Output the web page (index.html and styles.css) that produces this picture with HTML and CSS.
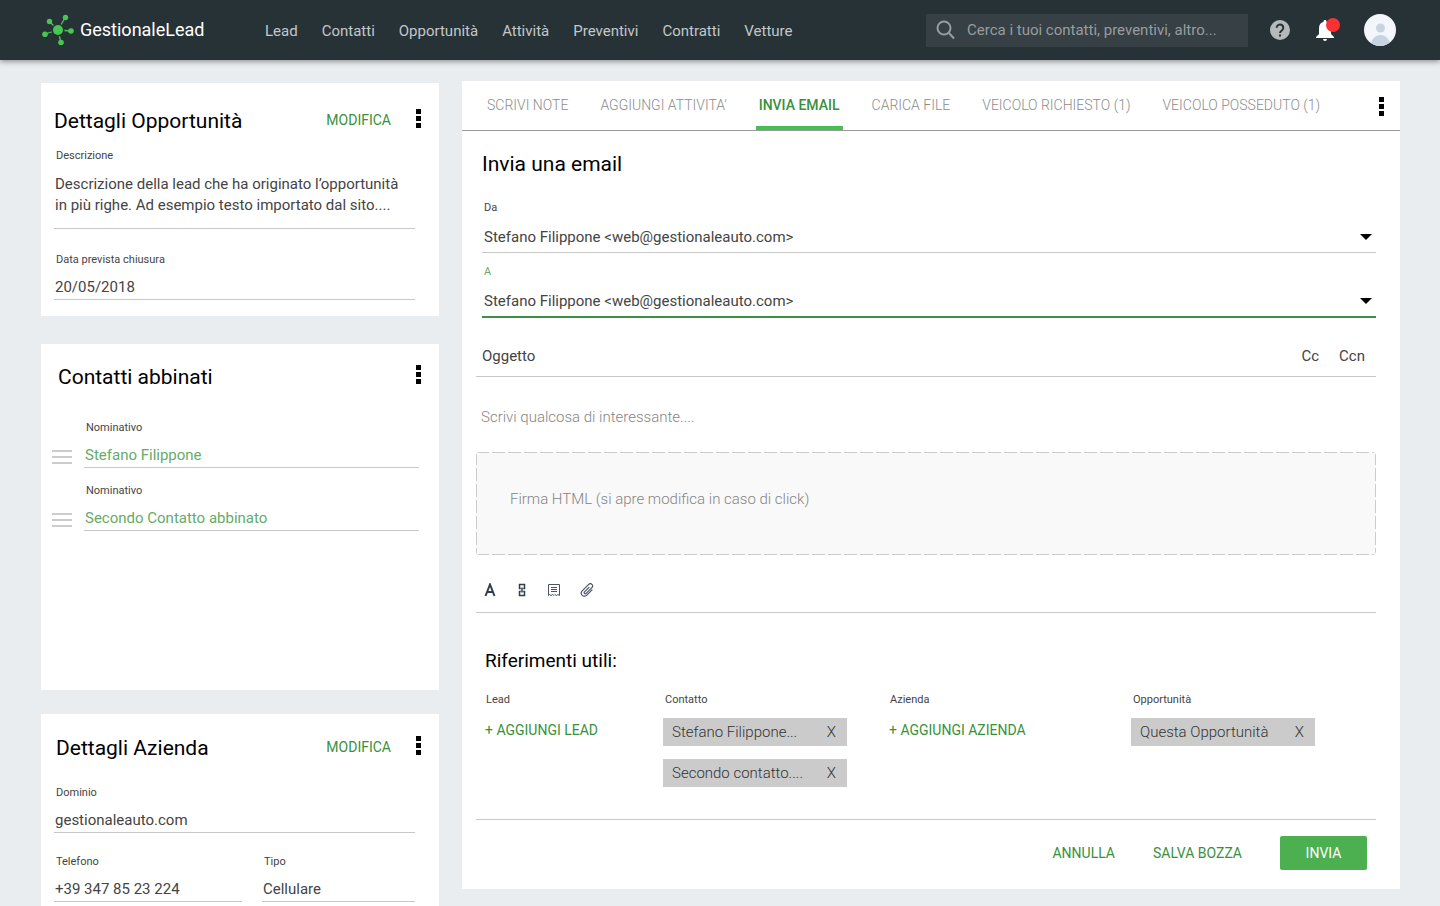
FILE: index.html
```html
<!DOCTYPE html>
<html lang="it">
<head>
    <meta charset="UTF-8">
    <meta name="viewport" content="width=device-width, initial-scale=1.0">
    <title>GestionaleLead</title>
    <link rel="stylesheet" href="styles.css">
</head>
<body>
    <header class="topbar">
        <a class="logo" href="#">
            <svg width="32" height="32" viewBox="0 0 32 32" fill="#48c750" stroke="#48c750" aria-hidden="true">
                <path d="M16 16 7 7M16 16l7.500-13M16 16l13 1M16 16l3 13M16 16 3 20" stroke-width="1.300" fill="none"/>
                <circle cx="16" cy="16" r="6.500" fill="#273237" stroke="none"/>
                <g stroke="none">
                    <circle cx="16" cy="16" r="5"/>
                    <circle cx="7.500" cy="7.500" r="2.700"/>
                    <circle cx="23.500" cy="3.500" r="2.700"/>
                    <circle cx="29" cy="17" r="2.800"/>
                    <circle cx="19" cy="28.500" r="2.800"/>
                    <circle cx="3" cy="20.300" r="2.800"/>
                </g>
            </svg>
            <span>GestionaleLead</span>
        </a>
        <nav class="menu">
            <a href="#">Lead</a>
            <a href="#">Contatti</a>
            <a href="#">Opportunità</a>
            <a href="#">Attività</a>
            <a href="#">Preventivi</a>
            <a href="#">Contratti</a>
            <a href="#">Vetture</a>
        </nav>
        <form class="search">
            <svg width="20" height="20" viewBox="0 0 20 20" fill="none" stroke="#989d9f" stroke-width="2" aria-hidden="true">
                <circle cx="8" cy="8" r="6.500"/>
                <path d="M12.500 12.500 18 18.500"/>
            </svg>
            <input type="search" aria-label="Cerca" placeholder="Cerca i tuoi contatti, preventivi, altro...">
        </form>
        <div class="tools">
            <button class="icon-btn" aria-label="Aiuto">
                <svg width="20" height="20" viewBox="0 0 20 20">
                    <circle cx="10" cy="10" r="10" fill="#b5b9bb"/>
                    <path d="M6.700 7.800a3.300 3.300 0 1 1 5.400 2.500C10.800 11.300 10 11.800 10 13" fill="none" stroke="#273237" stroke-width="2"/>
                    <rect x="9" y="14.500" width="2" height="2" fill="#273237"/>
                </svg>
            </button>
            <button class="icon-btn bell" aria-label="Notifiche">
                <svg width="20" height="24" viewBox="0 0 20 24" fill="#fff">
                    <path d="M10 2c-1 0-1.500.700-1.500 1.700C5.500 4.500 4 7 4 10v6l-3 3v1h18v-1l-3-3v-6c0-3-1.500-5.500-4.500-6.300C11.500 2.700 11 2 10 2zM8 21h4a2 2 0 0 1-4 0z"/>
                </svg>
                <span class="dot"></span>
            </button>
            <button class="icon-btn" aria-label="Profilo">
                <svg width="32" height="32" viewBox="0 0 32 32">
                    <defs><clipPath id="avatar"><circle cx="16" cy="16" r="16"/></clipPath></defs>
                    <g clip-path="url(#avatar)">
                        <rect width="32" height="32" fill="#f3f6fa"/>
                        <circle cx="16.500" cy="14" r="4.500" fill="#c9d4e2"/>
                        <path d="M7 32c0-7 4-11 9.500-11S26 25 26 32z" fill="#c9d4e2"/>
                    </g>
                </svg>
            </button>
        </div>
    </header>

    <main class="page">
        <aside class="sidebar">
            <section class="card">
                <div class="card-head">
                    <h2>Dettagli Opportunità</h2>
                    <button class="link-btn">MODIFICA</button>
                    <button class="kebab" aria-label="Altro"><i></i><i></i><i></i></button>
                </div>
                <div class="field descr">
                    <span class="label">Descrizione</span>
                    <p class="value">Descrizione della lead che ha originato l’opportunità in più righe. Ad esempio testo importato dal sito....</p>
                </div>
                <div class="field closing">
                    <span class="label">Data prevista chiusura</span>
                    <p class="value">20/05/2018</p>
                </div>
            </section>

            <section class="card contacts">
                <div class="card-head">
                    <h2>Contatti abbinati</h2>
                    <button class="kebab" aria-label="Altro"><i></i><i></i><i></i></button>
                </div>
                <div class="contact">
                    <span class="handle"></span>
                    <div class="field">
                        <span class="label">Nominativo</span>
                        <a class="value" href="#">Stefano Filippone</a>
                    </div>
                </div>
                <div class="contact">
                    <span class="handle"></span>
                    <div class="field">
                        <span class="label">Nominativo</span>
                        <a class="value" href="#">Secondo Contatto abbinato</a>
                    </div>
                </div>
            </section>

            <section class="card company">
                <div class="card-head">
                    <h2>Dettagli Azienda</h2>
                    <button class="link-btn">MODIFICA</button>
                    <button class="kebab" aria-label="Altro"><i></i><i></i><i></i></button>
                </div>
                <div class="field">
                    <span class="label">Dominio</span>
                    <p class="value">gestionaleauto.com</p>
                </div>
                <div class="field-row">
                    <div class="field">
                        <span class="label">Telefono</span>
                        <p class="value">+39 347 85 23 224</p>
                    </div>
                    <div class="field">
                        <span class="label">Tipo</span>
                        <p class="value">Cellulare</p>
                    </div>
                </div>
            </section>
        </aside>

        <section class="panel">
            <div class="tabs">
                <button class="tab">SCRIVI NOTE</button>
                <button class="tab">AGGIUNGI ATTIVITA’</button>
                <button class="tab active">INVIA EMAIL</button>
                <button class="tab">CARICA FILE</button>
                <button class="tab">VEICOLO RICHIESTO (1)</button>
                <button class="tab">VEICOLO POSSEDUTO (1)</button>
                <button class="kebab" aria-label="Altro"><i></i><i></i><i></i></button>
            </div>

            <form class="email">
                <h2>Invia una email</h2>
                <div class="select-field">
                    <label class="label" for="da">Da</label>
                    <select id="da">
                        <option>Stefano Filippone &lt;web@gestionaleauto.com&gt;</option>
                    </select>
                </div>
                <div class="select-field focused">
                    <label class="label" for="a">A</label>
                    <select id="a">
                        <option>Stefano Filippone &lt;web@gestionaleauto.com&gt;</option>
                    </select>
                </div>
                <div class="subject">
                    <input type="text" aria-label="Oggetto" placeholder="Oggetto">
                    <button type="button">Cc</button>
                    <button type="button">Ccn</button>
                </div>
                <textarea class="message" rows="1" aria-label="Messaggio" placeholder="Scrivi qualcosa di interessante...."></textarea>
                <div class="signature">Firma HTML (si apre modifica in caso di click)</div>
                <div class="format">
                    <button type="button" aria-label="Carattere">
                        <svg width="12" height="14" viewBox="0 0 12 14" fill="none" stroke="#333d4f" stroke-width="2"><path d="M1.500 13 6 1.500 10.500 13M3 9h6"/></svg>
                    </button>
                    <button type="button" aria-label="Link">
                        <svg width="12" height="14" viewBox="0 0 12 14" fill="none" stroke="#333d4f" stroke-width="1.500"><path d="M4.800 5.500H3.500v-4h5v4H7.200M4.800 8.500H3.500v4h5v-4H7.200M6 4.500v5"/></svg>
                    </button>
                    <button type="button" aria-label="Modello">
                        <svg width="12" height="14" viewBox="0 0 12 14" fill="none" stroke="#4c5566"><path d="M.500 12.500V1.500h11v11l-1.500-1-1.500 1-1.500-1-1 1-1.500-1-1.500 1-1.500-1zM3 4.500h6M3 6.500h6M3 8.500h6"/></svg>
                    </button>
                    <button type="button" aria-label="Allegato">
                        <svg width="14" height="14" viewBox="0 0 14 14" fill="none" stroke="#4c5566" stroke-width="1.200" stroke-linecap="round"><path d="M9 4.300 4.500 8.800a1.100 1.100 0 0 0 1.600 1.600l5.800-5.800a2.200 2.200 0 0 0-3.200-3.200L2.200 7.900a3.100 3.100 0 0 0 4.400 4.400l5.400-5.400"/></svg>
                    </button>
                </div>

                <h3>Riferimenti utili:</h3>
                <div class="refs">
                    <div class="ref">
                        <span class="label">Lead</span>
                        <button type="button" class="link-btn">+ AGGIUNGI LEAD</button>
                    </div>
                    <div class="ref">
                        <span class="label">Contatto</span>
                        <div class="chip">Stefano Filippone...<button type="button" aria-label="Rimuovi">X</button></div>
                        <div class="chip">Secondo contatto....<button type="button" aria-label="Rimuovi">X</button></div>
                    </div>
                    <div class="ref">
                        <span class="label">Azienda</span>
                        <button type="button" class="link-btn">+ AGGIUNGI AZIENDA</button>
                    </div>
                    <div class="ref">
                        <span class="label">Opportunità</span>
                        <div class="chip">Questa Opportunità<button type="button" aria-label="Rimuovi">X</button></div>
                    </div>
                </div>

                <div class="actions">
                    <button type="button" class="link-btn">ANNULLA</button>
                    <button type="button" class="link-btn">SALVA BOZZA</button>
                    <button type="submit" class="send">INVIA</button>
                </div>
            </form>
        </section>
    </main>
</body>
</html>
```
FILE: styles.css
```css
* {
    box-sizing: border-box;
}
body {
    margin: 0;
    min-height: 100vh;
    display: flex;
    flex-direction: column;
    background: #e9edf0;
    color: #444;
    font-family: Roboto, "Liberation Sans", sans-serif;
    font-size: 15px;
    line-height: 20px;
}
h2, h3, p {
    margin: 0;
    font-weight: 400;
}
h2, h3 {
    color: #000;
}
h2 {
    font-size: 21px;
    line-height: 32px;
}
h3 {
    font-size: 19px;
    line-height: 24px;
}
a {
    text-decoration: none;
}
button, input, select, textarea {
    margin: 0;
    padding: 0;
    border: none;
    background: none;
    color: inherit;
    font: inherit;
    outline: none;
}
button {
    cursor: pointer;
}
svg {
    display: block;
}

/* header */
.topbar {
    display: flex;
    align-items: center;
    height: 60px;
    padding: 0 44px 0 42px;
    background: #273237;
    box-shadow: 0 2px 5px rgba(0, 0, 0, 0.35);
}
.logo {
    display: flex;
    align-items: center;
    gap: 6px;
    width: 223px;
    color: #fff;
    font-size: 18px;
}
.menu {
    display: flex;
    gap: 24px;
    padding-top: 2px;
}
.menu a {
    color: #c3c7c8;
}
.search {
    display: flex;
    align-items: center;
    gap: 11px;
    width: 322px;
    height: 33px;
    margin-left: auto;
    padding: 0 10px;
    background: #364045;
}
.search input {
    flex: 1;
}
.search input::placeholder {
    color: #989d9f;
}
.tools {
    display: flex;
    align-items: center;
    gap: 25px;
    margin-left: 22px;
}
.icon-btn {
    position: relative;
}
.bell {
    margin-right: 4px;
}
.dot {
    position: absolute;
    top: 0;
    right: -5px;
    width: 14px;
    height: 14px;
    border-radius: 50%;
    background: #fc3135;
}

/* layout */
.page {
    flex: 1;
    display: grid;
    grid-template-columns: 398px 1fr;
    gap: 23px;
    padding: 21px 40px 0 41px;
}
.sidebar {
    display: flex;
    flex-direction: column;
    padding-top: 2px;
}

/* sidebar cards */
.card {
    padding: 22px 24px 16px 13px;
    background: #fff;
}
.card-head {
    display: flex;
    align-items: center;
    margin-right: -6px;
}
.card-head h2 {
    flex: 1;
}
.card-head .link-btn {
    margin-right: 25px;
    padding-bottom: 3px;
}
.link-btn {
    color: #38913c;
    font-size: 14px;
}
.kebab {
    display: flex;
    flex-direction: column;
    gap: 2px;
    padding-bottom: 6px;
}
.kebab i {
    width: 5px;
    height: 5px;
    background: #000;
}
.label {
    display: block;
    padding-left: 2px;
    font-size: 11px;
    line-height: 16px;
}
.field {
    margin-top: 21px;
    padding-bottom: 2px;
    border-bottom: 1px solid #c8c8c8;
}
.field .value {
    display: block;
    margin-top: 9px;
    padding-left: 1px;
}
.descr {
    margin-top: 11px;
    padding-bottom: 12px;
}
.field.closing {
    margin-top: 23px;
}
.descr .value {
    margin-top: 10px;
    padding-right: 10px;
    line-height: 21px;
}
.contacts {
    min-height: 346px;
    margin: 28px 0 24px;
    padding: 17px 20px 16px 11px;
}
.contacts .card-head {
    margin: 0 -2px 12px 6px;
}
.contact {
    display: flex;
    align-items: flex-end;
    gap: 12px;
}
.contact .field {
    flex: 1;
    margin-top: 15px;
}
.contact a {
    color: #66ab69;
}
.handle {
    width: 20px;
    height: 14px;
    margin-bottom: 4px;
    border: solid #ccc;
    border-width: 2px 0;
    background: linear-gradient(#ccc, #ccc) center / 100% 2px no-repeat;
}
.company {
    flex: 1;
    padding-top: 18px;
    padding-bottom: 4px;
}
.company h2 {
    padding-left: 2px;
}
.field-row {
    display: grid;
    grid-template-columns: 188fr 153fr;
    gap: 20px;
}

/* main panel */
.panel {
    align-self: start;
    margin-bottom: 17px;
    background: #fff;
}
.tabs {
    display: flex;
    gap: 26px;
    height: 50px;
    padding: 0 16px 0 22px;
    border-bottom: 1px solid #999;
}
.tab {
    padding: 2px 3px 0;
    border-bottom: 4px solid transparent;
    color: #8c8c8c;
    font-size: 14px;
    font-weight: 300;
}
.tab.active {
    border-color: #46c053;
    color: #38913c;
    font-weight: 500;
}
.tabs .kebab {
    margin-left: auto;
    padding: 16px 0 0;
}
.email {
    padding: 17px 24px 19px 14px;
}
.email h2 {
    padding-left: 6px;
}
.select-field {
    position: relative;
    margin: 20px 0 0 6px;
    border-bottom: 1px solid #c8c8c8;
}
.select-field select {
    display: block;
    width: 100%;
    height: 36px;
    padding: 8px 2px 3px;
    appearance: none;
}
.select-field::after {
    content: "";
    position: absolute;
    right: 4px;
    bottom: 12px;
    border: 6px solid transparent;
    border-top-color: #000;
    border-bottom: none;
}
.select-field.focused {
    margin-top: 11px;
    border-bottom: 2px solid #3d8f45;
}
.focused .label {
    color: #66ab69;
}
.subject {
    display: flex;
    gap: 20px;
    height: 59px;
    padding: 18px 11px 0 6px;
    border-bottom: 1px solid #c8c8c8;
}
.subject input {
    flex: 1;
}
.subject input::placeholder {
    color: #444;
}
.message {
    display: block;
    width: 100%;
    height: 20px;
    margin: 30px 0 25px;
    padding-left: 5px;
    resize: none;
    overflow: hidden;
    font-weight: 300;
}
.message::placeholder {
    color: #858585;
}
/* long dashes on the four sides */
.signature {
    min-height: 103px;
    padding: 37px 34px;
    border-radius: 4px;
    background:
        repeating-linear-gradient(90deg, #ccc 0 13px, transparent 13px 16px) top / 100% 1px no-repeat,
        repeating-linear-gradient(90deg, #ccc 0 13px, transparent 13px 16px) bottom / 100% 1px no-repeat,
        repeating-linear-gradient(#ccc 0 13px, transparent 13px 16px) left / 1px 100% no-repeat,
        repeating-linear-gradient(#ccc 0 13px, transparent 13px 16px) right / 1px 100% no-repeat,
        #f9f9f9;
    color: #858585;
    font-weight: 300;
}
.format {
    display: flex;
    align-items: center;
    gap: 20px;
    height: 58px;
    padding: 12px 8px 0;
    border-bottom: 1px solid #c8c8c8;
}
.email h3 {
    padding: 36px 0 19px 9px;
}
.refs {
    display: grid;
    grid-template-columns: 178fr 226fr 242fr 245fr;
    min-height: 128px;
    padding-left: 9px;
    border-bottom: 1px solid #c8c8c8;
}
.ref .link-btn {
    margin-top: 12px;
}
.ref:nth-child(odd) .label {
    padding-left: 1px;
}
.chip {
    display: flex;
    justify-content: space-between;
    align-items: center;
    width: 184px;
    height: 28px;
    margin-top: 10px;
    padding: 0 11px 0 9px;
    background: #cbcbcb;
    font-weight: 300;
    color: #333;
}
.chip + .chip {
    margin-top: 13px;
}
.actions {
    display: flex;
    justify-content: flex-end;
    align-items: center;
    gap: 38px;
    padding: 16px 9px 0 0;
}
.send {
    width: 87px;
    height: 34px;
    border-radius: 2px;
    background: #4caf50;
    color: #fff;
    font-size: 14px;
}
```
